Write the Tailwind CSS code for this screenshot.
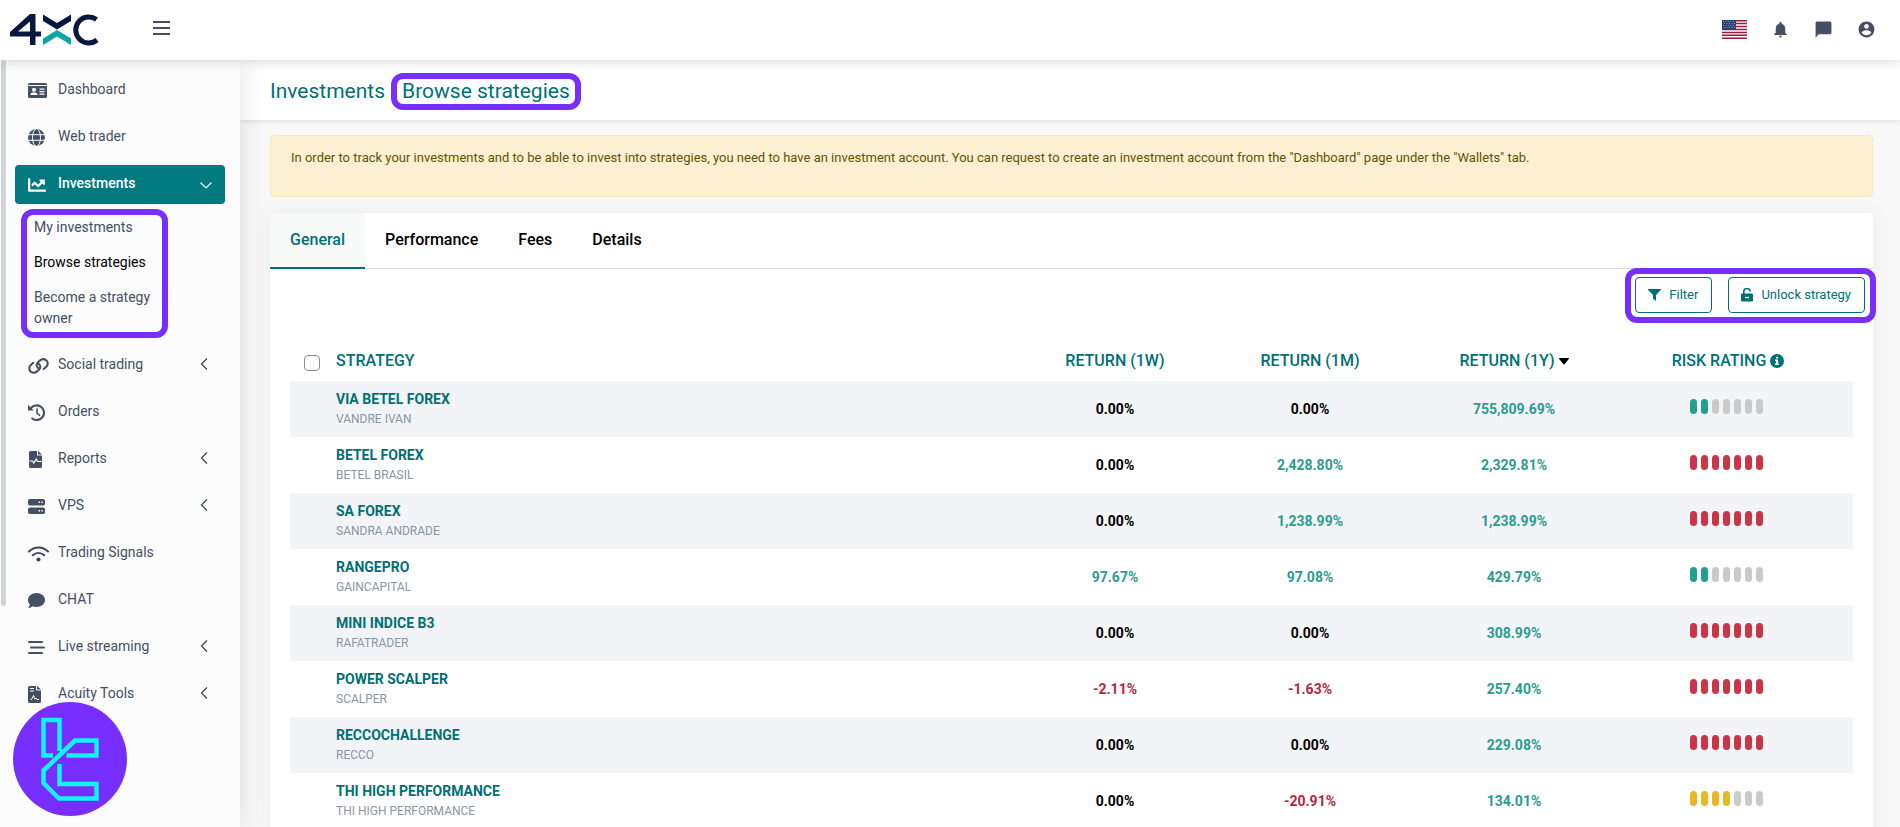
<!DOCTYPE html>
<html lang="en">
<head>
<meta charset="utf-8">
<meta name="viewport" content="width=device-width, initial-scale=1">
<title>Browse strategies</title>
<script src="https://cdn.jsdelivr.net/npm/@tailwindcss/browser@4"></script>
</head>
<body class="flex h-screen flex-col overflow-hidden bg-[#f8f8f8] font-['Roboto',sans-serif] text-sm text-[#454f5f]">

<header class="relative z-20 flex h-[60px] shrink-0 items-center bg-white px-[10px] shadow-[0_2px_10px_rgba(0,0,0,0.15)]">
  <a href="#" aria-label="4XC home" class="block">
    <svg class="block" width="90" height="32" viewBox="0 0 90 32">
      <path fill="#071740" fill-rule="evenodd" d="M20 0h5.500v17.500H31v5h-5.500V31H20v-8.500H0V18zM20 7.500 8 17.500h12z"/>
      <path fill="#071740" d="M33 0.500 47 9 61 0.500V7L47 15.500 33 7z"/>
      <path fill="#0aa7a0" d="M33 31V24.500L47 16l14 8.500V31l-14-8.500z"/>
      <path fill="none" stroke="#071740" stroke-width="5" d="M86.500 5.500A13 13 0 1 0 87 26"/>
    </svg>
  </a>
  <button type="button" aria-label="Toggle menu" class="ml-[53px] mb-1">
    <svg class="block" width="17" height="14" viewBox="0 0 17 14" fill="#454f63"><path d="M0 0h17v2H0zM0 6h17v2H0zM0 12h17v2H0z"/></svg>
  </button>
  <div class="mb-px ml-auto mr-[14px] flex items-center gap-6">
    <button type="button" aria-label="Language: English (US)">
      <svg class="block" width="25" height="19" viewBox="0 0 25 19">
        <path fill="#fff" d="M0 0h25v19H0z"/>
        <path stroke="#9b1c3d" stroke-width="1.500" d="M0 .7h25M0 3.600h25M0 6.600h25M0 9.500h25M0 12.400h25M0 15.300h25M0 18.200h25"/>
        <path fill="#2f4070" d="M0 0h14v10H0z"/>
        <path stroke="#9aa6c4" stroke-width=".8" stroke-dasharray="1 1.500" d="M1 1.500h12M2 3.500h11M1 5.500h12M2 7.500h11"/>
      </svg>
    </button>
    <button type="button" aria-label="Notifications"><svg class="block" width="19" height="19" viewBox="0 0 24 24" fill="#454f63"><path d="M12 22c1.100 0 2-.9 2-2h-4c0 1.100.89 2 2 2zm6-6v-5c0-3.070-1.640-5.640-4.500-6.320V4c0-.83-.67-1.500-1.500-1.500s-1.500.67-1.500 1.500v.68C7.630 5.360 6 7.920 6 11v5l-2 2v1h16v-1l-2-2z"/></svg></button>
    <button type="button" aria-label="Messages"><svg class="block" width="19" height="19" viewBox="0 0 24 24" fill="#454f63"><path d="M20 2H4c-1.100 0-2 .9-2 2v18l4-4h14c1.100 0 2-.9 2-2V4c0-1.100-.9-2-2-2z"/></svg></button>
    <button type="button" aria-label="Account"><svg class="block" width="19" height="19" viewBox="0 0 24 24" fill="#454f63"><path d="M12 2C6.480 2 2 6.480 2 12s4.480 10 10 10 10-4.480 10-10S17.520 2 12 2zm0 3c1.660 0 3 1.340 3 3s-1.340 3-3 3-3-1.340-3-3 1.340-3 3-3zm0 14.200c-2.500 0-4.710-1.280-6-3.220.03-1.990 4-3.080 6-3.080 1.990 0 5.970 1.090 6 3.080-1.290 1.940-3.500 3.220-6 3.220z"/></svg></button>
  </div>
</header>

<div class="flex min-h-0 flex-1">
  <aside class="relative z-10 w-60 shrink-0 overflow-hidden bg-[#fcfcfd] px-[15px] pt-[11px] shadow-[0_0_26px_rgba(0,0,0,0.12)]">
    <div class="absolute left-px top-0 h-[546px] w-[5px] rounded-full bg-[#d2d3d4]"></div>
    <nav>
      <ul class="flex flex-col gap-2">
        <li><a href="#" class="flex h-[39px] items-center px-[13px]">
          <span class="w-[30px]"><svg width="19" height="15" viewBox="0 0 19 15"><path fill="#454f63" d="M1.500 0h16A1.500 1.500 0 0 1 19 1.500V2H0v-.5A1.500 1.500 0 0 1 1.500 0zM0 3h19v10.500a1.500 1.500 0 0 1-1.500 1.500h-16A1.500 1.500 0 0 1 0 13.500z"/><circle cx="6" cy="6.800" r="2" fill="#fff"/><path fill="#fff" d="M2.500 12c0-2 1.500-2.500 3.500-2.500s3.500.5 3.500 2.500zM11.500 5.500h5v1.200h-5zM11.500 8h5v1.200h-5zM11.500 10.500h5v1.200h-5z"/></svg></span>
          <span class="pb-1">Dashboard</span></a></li>
        <li><a href="#" class="flex h-[39px] items-center px-[13px]">
          <span class="w-[30px]"><svg width="17" height="17" viewBox="0 0 17 17"><circle cx="8.500" cy="8.500" r="8.500" fill="#454f63"/><path fill="none" stroke="#fcfcfd" d="M0 5.700h17M0 11.300h17"/><ellipse cx="8.500" cy="8.500" rx="4" ry="8.800" fill="none" stroke="#fcfcfd"/></svg></span>
          <span class="pb-1">Web trader</span></a></li>
        <li>
          <button type="button" aria-expanded="true" class="flex h-[39px] w-full items-center rounded bg-[#007a7e] px-[13px] font-medium text-white">
            <span class="w-[30px]"><svg width="18" height="18" viewBox="0 0 512 512" fill="#fff"><path d="M496 384H64V80c0-8.840-7.160-16-16-16H16C7.160 64 0 71.160 0 80v336c0 17.670 14.330 32 32 32h464c8.840 0 16-7.160 16-16v-32c0-8.840-7.160-16-16-16zM464 96H345.940c-21.380 0-32.090 25.850-16.970 40.970l32.400 32.400L288 242.750l-73.370-73.370c-12.500-12.500-32.760-12.500-45.250 0l-68.690 68.690c-6.250 6.250-6.250 16.380 0 22.630l22.620 22.620c6.250 6.250 16.380 6.250 22.630 0L192 237.250l73.370 73.370c12.500 12.500 32.760 12.500 45.250 0l96-96 32.400 32.400c15.120 15.120 40.970 4.410 40.970-16.970V112c.01-8.840-7.150-16-15.990-16z"/></svg></span>
            <span class="pb-1">Investments</span>
            <svg class="ml-auto mt-px" width="12" height="8" viewBox="0 0 12 8" fill="none" stroke="#fff" stroke-width="1.200"><path d="M.5 1.500 6 7 11.500 1.500"/></svg>
          </button>
          <ul class="ml-[6px] mt-[5px] flex w-[147px] flex-col gap-[14px] rounded-xl border-[6px] border-[#762fff] pb-[3px] pl-[7px] pt-[2px] leading-[21px]">
            <li><a href="#">My investments</a></li>
            <li><a href="#" aria-current="page" class="text-black">Browse strategies</a></li>
            <li><a href="#">Become a strategy owner</a></li>
          </ul>
        </li>
        <li><a href="#" class="flex h-[39px] items-center px-[13px]">
          <span class="w-[30px]"><svg width="21" height="16" viewBox="0 0 21 16" fill="none" stroke="#454f63" stroke-width="2.100" stroke-linecap="round"><path d="M11.200 10.700C8.500 9.500 8 6.600 9.800 4.500l1.800-1.700c2-1.800 4.700-1.900 6.600-.5 2.100 1.800 2 4.500 0 6.500l-2.500 2.300"/><path d="M9.800 5.200c2.700 1.200 3.200 4.100 1.400 6.200L9.400 13.100c-2 1.800-4.700 1.900-6.600.5-2.100-1.800-2-4.500 0-6.500l2.500-2.300"/></svg></span>
          <span class="pb-1">Social trading</span><svg class="mb-[3px] ml-auto mr-[4px]" width="8" height="12" viewBox="0 0 8 12" fill="none" stroke="#333d4a" stroke-width="1.200"><path d="M7 .5 1.500 6 7 11.500"/></svg></a></li>
        <li><a href="#" class="flex h-[39px] items-center px-[13px]">
          <span class="w-[30px]"><svg width="17" height="17" viewBox="0 0 17 17" fill="none" stroke="#454f63" stroke-width="2.100" stroke-linecap="round"><path d="M2.500 4.800A7.300 7.300 0 1 1 4.300 14.500"/><path stroke-width="1.600" d="M9 5v4l2.500 2.300"/><path fill="#454f63" stroke="none" d="M0 .8V6.500h5.700z"/></svg></span>
          <span class="pb-1">Orders</span></a></li>
        <li><a href="#" class="flex h-[39px] items-center px-[13px]">
          <span class="w-[30px] pl-px"><svg width="13" height="17" viewBox="0 0 13 17"><path fill="#454f63" d="M1.500 0H8v4.500h5v11a1.500 1.500 0 0 1-1.500 1.500h-10A1.500 1.500 0 0 1 0 15.500v-14A1.500 1.500 0 0 1 1.500 0zM9 0l4 3.500H9z"/><path fill="none" stroke="#fcfcfd" stroke-width="1.200" d="M0 10h3.500l1.300 2L7.200 8l1.300 2.500H13"/></svg></span>
          <span class="pb-1">Reports</span><svg class="mb-[3px] ml-auto mr-[4px]" width="8" height="12" viewBox="0 0 8 12" fill="none" stroke="#333d4a" stroke-width="1.200"><path d="M7 .5 1.500 6 7 11.500"/></svg></a></li>
        <li><a href="#" class="flex h-[39px] items-center px-[13px]">
          <span class="w-[30px]"><svg width="17" height="15" viewBox="0 0 17 15"><rect width="17" height="6.500" rx="1.800" fill="#454f63"/><rect y="8.500" width="17" height="6.500" rx="1.800" fill="#454f63"/><path fill="#fff" d="M10.500 2.500h1.500V4h-1.500zM13.300 2.500h1.500V4h-1.500zM10.500 11h1.500v1.500h-1.500zM13.300 11h1.500v1.500h-1.500z"/></svg></span>
          <span class="pb-1">VPS</span><svg class="mb-[3px] ml-auto mr-[4px]" width="8" height="12" viewBox="0 0 8 12" fill="none" stroke="#333d4a" stroke-width="1.200"><path d="M7 .5 1.500 6 7 11.500"/></svg></a></li>
        <li><a href="#" class="flex h-[39px] items-center px-[13px]">
          <span class="w-[30px]"><svg width="21" height="16" viewBox="0 0 21 16" fill="none" stroke="#37475a" stroke-width="2" stroke-linecap="round"><path d="M1 5.500c5.500-5.300 13.500-5.300 19 0M4.800 9.300c3.400-3.200 8-3.200 11.400 0"/><circle cx="10.500" cy="13.500" r="2.100" fill="#37475a" stroke="none"/></svg></span>
          <span class="pb-1">Trading Signals</span></a></li>
        <li><a href="#" class="flex h-[39px] items-center px-[13px]">
          <span class="w-[30px]"><svg width="17" height="15" viewBox="0 0 17 15" fill="#454f63"><path d="M8.500 0C13.200 0 17 3 17 7s-3.800 7-8.500 7c-1.500 0-2.800-.3-4-.8C3.300 14.200 1.700 15 0 15c.9-1 1.700-2.200 1.800-3.500C.7 10.200 0 8.700 0 7c0-4 3.800-7 8.500-7z"/></svg></span>
          <span class="pb-1">CHAT</span></a></li>
        <li><a href="#" class="flex h-[39px] items-center px-[13px]">
          <span class="w-[30px]"><svg width="17" height="13" viewBox="0 0 17 13" fill="none" stroke="#454f63" stroke-width="2" stroke-linecap="round"><path d="M1 1h13M3 6.500h13M1 12h13"/></svg></span>
          <span class="pb-1">Live streaming</span><svg class="mb-[3px] ml-auto mr-[4px]" width="8" height="12" viewBox="0 0 8 12" fill="none" stroke="#333d4a" stroke-width="1.200"><path d="M7 .5 1.500 6 7 11.500"/></svg></a></li>
        <li><a href="#" class="flex h-[39px] items-center px-[13px]">
          <span class="w-[30px]"><svg width="13" height="17" viewBox="0 0 13 17"><path fill="#454f63" d="M1.500 0H8v4.500h5v11a1.500 1.500 0 0 1-1.500 1.500h-10A1.500 1.500 0 0 1 0 15.500v-14A1.500 1.500 0 0 1 1.500 0zM9 0l4 3.500H9z"/><path fill="none" stroke="#fcfcfd" d="M2 2.500h4M2 5h4M2.500 13.500h1L5.500 9.500l1.300 3.500 1.200-1 1 1.500h2"/></svg></span>
          <span class="pb-1">Acuity Tools</span><svg class="mb-[3px] ml-auto mr-[4px]" width="8" height="12" viewBox="0 0 8 12" fill="none" stroke="#333d4a" stroke-width="1.200"><path d="M7 .5 1.500 6 7 11.500"/></svg></a></li>
      </ul>
    </nav>
  </aside>

  <main class="min-w-0 flex-1 overflow-y-auto [scrollbar-width:none]">
    <h1 class="flex h-[60px] items-center bg-white pl-[30px] pt-[2px] text-[21px] text-[#007075] shadow-[0_1px_6px_rgba(0,0,0,0.12)]">
      <span>Investments</span>
      <span class="ml-[6px] rounded-xl border-[6px] border-[#762fff] px-[5px] leading-[25px]">Browse strategies</span>
    </h1>

    <div class="ml-[30px] mr-[27px] mt-[15px] h-[62px] rounded-sm border border-[#f9e9c0] bg-[#fcf0d3] px-5 pt-3 text-[13px] leading-5 text-[#665100]" role="alert">In order to track your investments and to be able to invest into strategies, you need to have an investment account. You can request to create an investment account from the "Dashboard" page under the "Wallets" tab.</div>

    <section class="ml-[30px] mr-[27px] mt-4 rounded bg-white pb-10 shadow-[0_0_20px_rgba(0,0,0,0.05)]">
      <div role="tablist" class="flex h-14 border-b border-[#d9dbdd] text-base font-medium text-black">
        <button type="button" role="tab" aria-selected="true" class="-mb-px border-b-2 border-[#006e73] bg-[#f8f9f9] px-5 text-[#007075]">General</button>
        <button type="button" role="tab" aria-selected="false" class="px-5 pb-px">Performance</button>
        <button type="button" role="tab" aria-selected="false" class="px-5 pb-px">Fees</button>
        <button type="button" role="tab" aria-selected="false" class="px-5 pb-px">Details</button>
      </div>
      <div class="-mr-[3px] -mt-px ml-auto flex w-fit gap-4 rounded-xl border-[6px] border-[#762fff] pb-1 pl-1 pr-[5px] pt-[3px] text-[13px] text-[#007075]">
        <button type="button" class="flex h-9 items-center gap-2 rounded border border-[#007075] px-[13px] pl-3">
          <svg width="13" height="12" viewBox="0 0 13 12" fill="#007075"><path d="M.5 0h12c.5 0 .7.500.3.900L8 6v6L5 9.800V6L.2.900C-.2.500 0 0 .5 0z"/></svg>Filter</button>
        <button type="button" class="flex h-9 items-center gap-2 rounded border border-[#007075] px-[13px] pl-3">
          <svg width="12" height="14" viewBox="0 0 12 14"><path fill="none" stroke="#007075" stroke-width="1.600" d="M2.800 6V3.800a3.200 3.200 0 0 1 6.400-.3"/><rect y="5.500" width="12" height="8" rx="1.300" fill="#007075"/><path fill="#fff" d="M4 8.800h4v1.400H4z"/></svg>Unlock strategy</button>
      </div>
      <div class="mx-5 mt-4">
        <table class="w-full table-fixed text-center font-bold">
          <colgroup><col class="w-[46px]"><col><col class="w-[160px]"><col class="w-[230px]"><col class="w-[178px]"><col class="w-[250px]"></colgroup>
          <thead class="text-base text-[#007075]">
            <tr class="h-[42px]">
              <th class="pl-[14px] pt-[6px] text-left"><input type="checkbox" aria-label="Select all strategies" class="block size-4 appearance-none rounded border border-[#8a9097] bg-white"></th>
              <th class="pt-[2px] text-left font-medium">STRATEGY</th>
              <th class="pt-[2px] font-medium">RETURN (1W)</th>
              <th class="pt-[2px] font-medium">RETURN (1M)</th>
              <th class="pt-[2px] font-medium" aria-sort="descending"><span class="inline-flex items-center gap-1">RETURN (1Y)<svg width="10" height="7" viewBox="0 0 10 7"><path d="M.5 0h9c.5 0 .6.500.3.900L5.500 6.300c-.3.400-.7.400-1 0L.2.900C-.1.500 0 0 .5 0z"/></svg></span></th>
              <th class="pt-[2px] font-medium"><span class="inline-flex items-center gap-1">RISK RATING<svg width="14" height="14" viewBox="0 0 14 14"><circle cx="7" cy="7" r="7" fill="#007075"/><path fill="#fff" d="M6 2.800h2v1.700H6zM5 5.600h3V9.500h1V11H5V9.500h1V7H5z"/></svg></span></th>
            </tr>
          </thead>
          <tbody id="rows"></tbody>
        </table>
      </div>
    </section>
  </main>
</div>

<svg class="fixed bottom-[11px] left-[13px] z-30" width="114" height="114" viewBox="0 0 114 114" role="img" aria-label="Publisher badge">
  <circle cx="57" cy="57" r="57" fill="#762fff"/>
  <g fill="none" stroke="#12f4fd" stroke-width="4.500">
    <path d="M40 53.500h-9.500v-35.500H46.500v31"/>
    <path d="M46.500 62v20H83.500V96.500H46L30.500 81V68.500L62 38.500h21.500v15H53.500"/>
  </g>
</svg>

<script>
  const strategies = [
    ["VIA BETEL FOREX", "VANDRE IVAN", "0.00%", "0.00%", "755,809.69%", 2],
    ["BETEL FOREX", "BETEL BRASIL", "0.00%", "2,428.80%", "2,329.81%", 7],
    ["SA FOREX", "SANDRA ANDRADE", "0.00%", "1,238.99%", "1,238.99%", 7],
    ["RANGEPRO", "GAINCAPITAL", "97.67%", "97.08%", "429.79%", 2],
    ["MINI INDICE B3", "RAFATRADER", "0.00%", "0.00%", "308.99%", 7],
    ["POWER SCALPER", "SCALPER", "-2.11%", "-1.63%", "257.40%", 7],
    ["RECCOCHALLENGE", "RECCO", "0.00%", "0.00%", "229.08%", 7],
    ["THI HIGH PERFORMANCE", "THI HIGH PERFORMANCE", "0.00%", "-20.91%", "134.01%", 4]
  ];
  const tone = v => v === "0.00%" ? "text-black" : v.startsWith("-") ? "text-[#b5273d]" : "text-[#2a9d8f]";
  const fill = n => n <= 2 ? "bg-[#22a08f]" : n <= 4 ? "bg-[#e8b823]" : "bg-[#cb3547]";
  document.getElementById("rows").innerHTML = strategies.map(([name, owner, w, m, y, risk]) => `
    <tr class="h-14 odd:bg-[#f2f4f7]">
      <td></td>
      <td class="text-left"><a href="#" class="block leading-5 text-[#007075]">${name}</a><span class="block text-xs leading-5 font-normal text-[#8a95a3]">${owner}</span></td>
      ${[w, m, y].map(v => `<td class="${tone(v)}">${v}</td>`).join("")}
      <td><div class="flex justify-center gap-1 pb-[6px] pr-[3px]" role="img" aria-label="Risk ${risk} of 7">${
        Array.from({ length: 7 }, (_, i) => `<span class="h-[15px] w-[7px] rounded-full ${i < risk ? fill(risk) : "bg-[#cacaca]"}"></span>`).join("")
      }</div></td>
    </tr>`).join("");
</script>
</body>
</html>
